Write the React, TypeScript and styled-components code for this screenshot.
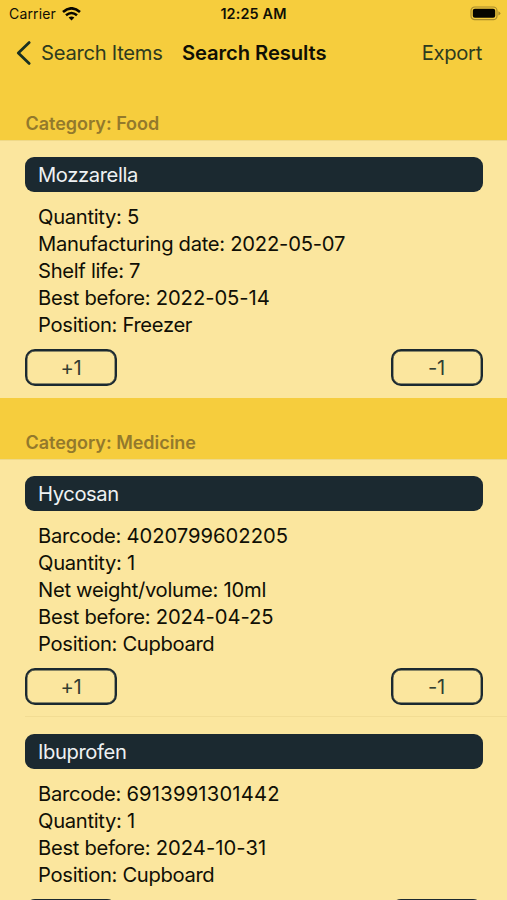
import React from "react";
import styled, { createGlobalStyle } from "styled-components";

const GlobalStyle = createGlobalStyle`
  * { box-sizing: border-box; }
  html, body { margin: 0; padding: 0; background: #f6cd3d; }
  body { overflow: hidden; }
`;

const ink = "#1b2930";

const Screen = styled.main`
  width: 507px;
  height: 900px;
  overflow: hidden;
  background: #f6cd3d;
  color: #100f05;
  font-family: Inter, "Liberation Sans", sans-serif;
  font-size: 20.2px;
  white-space: nowrap;
`;

const StatusBar = styled.div`
  display: grid;
  grid-template-columns: 1fr auto 1fr;
  align-items: center;
  height: 27px;
  padding: 0 6px 0 9px;
  font-size: 14px;
`;

const Carrier = styled.div`
  display: flex;
  align-items: center;
  gap: 6px;
  letter-spacing: 0.15px;
`;

const Clock = styled.div`
  font-size: 14.4px;
  font-weight: 600;
  letter-spacing: 0.15px;
  margin-right: 3px;
`;

const BatteryIcon = styled.svg`
  justify-self: end;
`;

const NavBar = styled.nav`
  display: grid;
  grid-template-columns: 182px 1fr auto;
  align-items: center;
  height: 51px;
  padding-right: 25px;
`;

const BackLink = styled.a`
  display: flex;
  align-items: center;
  gap: 9px;
  padding-left: 16px;
  color: #2e3b1f;
  letter-spacing: -0.27px;
`;

const NavTitle = styled.h1`
  margin: 0;
  font-size: 20.2px;
  font-weight: 600;
  letter-spacing: -0.08px;
`;

const ExportLink = styled.a`
  color: #2e3b1f;
  letter-spacing: -0.3px;
`;

const SectionHeader = styled.h2<{ $height: number }>`
  display: flex;
  align-items: flex-end;
  height: ${(p) => p.$height}px;
  margin: 0;
  padding: 0 25px 5px 25.5px;
  color: #93792c;
  font-size: 18px;
  line-height: 22px;
  font-weight: 600;
  letter-spacing: -0.03px;
`;

const Cell = styled.article<{ $height: number }>`
  height: ${(p) => p.$height}px;
  padding: 16px 24.5px 0 25px;
  background: #fbe69e;
  border-top: 1px solid #efd989;
`;

const DividedCell = styled(Cell)`
  border-top: 0;
  padding-top: 18px;
  background: linear-gradient(#f2dc93, #f2dc93) 25px 0 / 100% 1px no-repeat #fbe69e;
`;

const ItemTitle = styled.h3`
  height: 35px;
  margin: 0;
  padding-left: 13px;
  border-radius: 9px;
  background: ${ink};
  color: #eef1f3;
  font-size: 20.2px;
  line-height: 36px;
  font-weight: 400;
  letter-spacing: -0.4px;
`;

const Details = styled.div`
  padding: 12px 13px 0;
  line-height: 26.9px;
`;

const Label = styled.span`
  letter-spacing: -0.3px;
`;

const Value = styled.span<{ $tracking: number }>`
  letter-spacing: ${(p) => p.$tracking}px;
`;

const Actions = styled.div`
  display: flex;
  justify-content: space-between;
  margin-top: 10px;
`;

const StepButton = styled.button`
  width: 92px;
  height: 37px;
  padding: 0;
  border: 2.4px solid ${ink};
  border-radius: 10px;
  background: transparent;
  color: #333e32;
  font: inherit;
  letter-spacing: -0.3px;
  box-shadow: inset 0 0 0 0.4px ${ink};
`;

type Field = [label: string, value: string, tracking?: number];

interface ItemProps {
  name: string;
  fields: Field[];
  height: number;
  divided?: boolean;
}

const Item = ({ name, fields, height, divided }: ItemProps) => {
  const Wrap = divided ? DividedCell : Cell;
  return (
    <Wrap $height={height}>
      <ItemTitle>{name}</ItemTitle>
      <Details>
        {fields.map(([label, value, tracking = -0.2]) => (
          <div key={label}>
            <Label>{label}: </Label>
            <Value $tracking={tracking}>{value}</Value>
          </div>
        ))}
      </Details>
      <Actions>
        <StepButton>+1</StepButton>
        <StepButton>-1</StepButton>
      </Actions>
    </Wrap>
  );
};

export default function App() {
  return (
    <Screen>
      <GlobalStyle />
      <StatusBar>
        <Carrier>
          <span>Carrier</span>
          <svg width="19" height="14" viewBox="0 0 19 14" fill="none" stroke="#080700" strokeWidth="2.6">
            <path d="M1 5Q9.5-2.4 18 5" />
            <path d="M4 8.3Q9.5 3.7 15 8.3" />
            <path d="M6.6 10.6Q9.5 8.3 12.4 10.6L9.5 13.6Z" fill="#080700" stroke="none" />
          </svg>
        </Carrier>
        <Clock>12:25 AM</Clock>
        <BatteryIcon width="31" height="15" viewBox="0 0 31 15">
          <rect x="1" y="1" width="26" height="12.6" rx="3.7" fill="none" stroke="#a78c2c" strokeWidth="1.2" />
          <rect x="2.8" y="2.8" width="22.4" height="9" rx="2" fill="#050500" />
          <path d="M28.4 5.2Q30.4 6 30.4 7.3T28.4 9.4Z" fill="#a78c2c" />
        </BatteryIcon>
      </StatusBar>
      <NavBar>
        <BackLink>
          <svg width="16" height="26" viewBox="0 0 16 26" fill="none" stroke="#193022" strokeWidth="2.8" strokeLinecap="round" strokeLinejoin="round">
            <path d="M13.2 2.6L2.3 13L13.2 23.4" />
          </svg>
          Search Items
        </BackLink>
        <NavTitle>Search Results</NavTitle>
        <ExportLink>Export</ExportLink>
      </NavBar>
      <SectionHeader $height={62}>Category: Food</SectionHeader>
      <Item
        name="Mozzarella"
        height={258}
        fields={[
          ["Quantity", "5"],
          ["Manufacturing date", "2022-05-07"],
          ["Shelf life", "7"],
          ["Best before", "2022-05-14", -0.05],
          ["Position", "Freezer", -0.35],
        ]}
      />
      <SectionHeader $height={61}>Category: Medicine</SectionHeader>
      <Item
        name="Hycosan"
        height={257}
        fields={[
          ["Barcode", "4020799602205", 0],
          ["Quantity", "1"],
          ["Net weight/volume", "10ml"],
          ["Best before", "2024-04-25", -0.05],
          ["Position", "Cupboard", -0.35],
        ]}
      />
      <Item
        divided
        name="Ibuprofen"
        height={231}
        fields={[
          ["Barcode", "6913991301442", 0.2],
          ["Quantity", "1"],
          ["Best before", "2024-10-31", 0.05],
          ["Position", "Cupboard", -0.35],
        ]}
      />
    </Screen>
  );
}
